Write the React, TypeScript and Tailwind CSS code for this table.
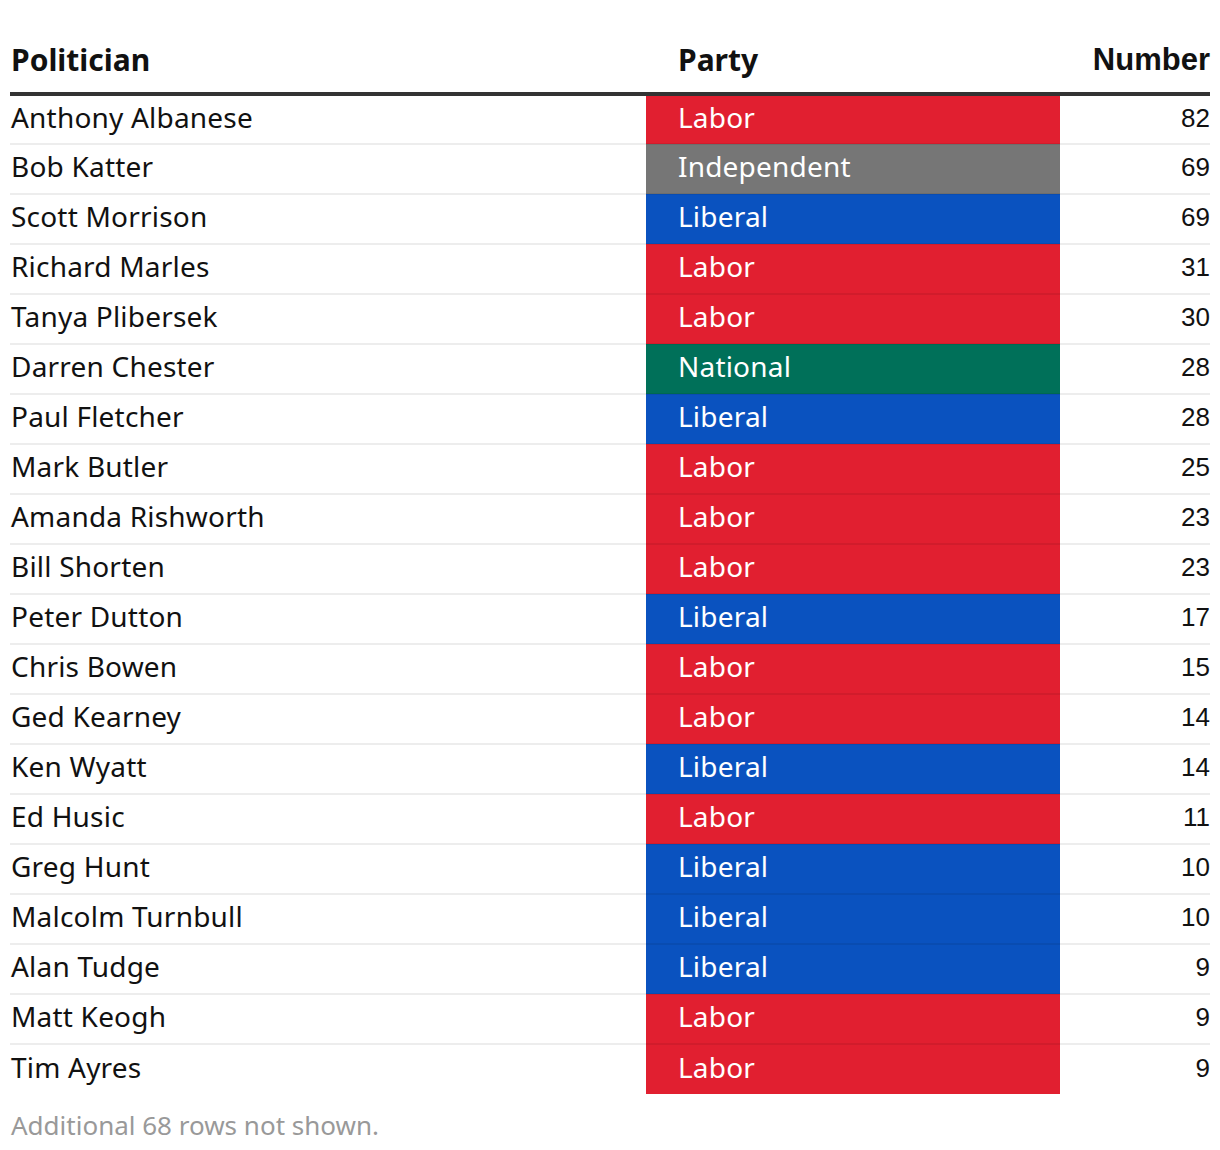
const rows: [string, string, number][] = [
  ["Anthony Albanese", "Labor", 82],
  ["Bob Katter", "Independent", 69],
  ["Scott Morrison", "Liberal", 69],
  ["Richard Marles", "Labor", 31],
  ["Tanya Plibersek", "Labor", 30],
  ["Darren Chester", "National", 28],
  ["Paul Fletcher", "Liberal", 28],
  ["Mark Butler", "Labor", 25],
  ["Amanda Rishworth", "Labor", 23],
  ["Bill Shorten", "Labor", 23],
  ["Peter Dutton", "Liberal", 17],
  ["Chris Bowen", "Labor", 15],
  ["Ged Kearney", "Labor", 14],
  ["Ken Wyatt", "Liberal", 14],
  ["Ed Husic", "Labor", 11],
  ["Greg Hunt", "Liberal", 10],
  ["Malcolm Turnbull", "Liberal", 10],
  ["Alan Tudge", "Liberal", 9],
  ["Matt Keogh", "Labor", 9],
  ["Tim Ayres", "Labor", 9],
];

const partyBg: Record<string, string> = {
  Labor: "bg-[#e11f30]",
  Independent: "bg-[#767676]",
  Liberal: "bg-[#0a52bf]",
  National: "bg-[#007059]",
};

export default function App() {
  return (
    <div className="bg-white min-h-[1150px] px-[10px] pt-[40px] font-['Noto_Sans',sans-serif] text-[#111]">
      <table className="w-full border-collapse">
        <thead>
          <tr className="border-b-4 border-[#333]">
            <th className="w-[636px] text-left font-bold text-[30px] leading-[34px] pt-[3px] pb-[15px] pl-[1px]">Politician</th>
            <th className="w-[414px] text-left font-bold text-[30px] leading-[34px] pt-[3px] pb-[15px] pl-[32px]">Party</th>
            <th className="text-right font-bold text-[31px] leading-[34px] pt-[3px] pb-[15px] font-['Liberation_Sans',sans-serif]">Number</th>
          </tr>
        </thead>
        <tbody>
          {rows.map(([name, party, n], i) => (
            <tr key={i} className={i > 0 ? "border-t-2 border-[rgba(0,0,0,0.07)]" : ""}>
              <td className="h-[50px] pl-[1px] pb-[6px] text-[28px] leading-[34px] tracking-[0.2px]">{name}</td>
              <td className={"pl-[32px] pb-[6px] text-[28px] leading-[34px] tracking-[0.2px] text-white " + partyBg[party]}>{party}</td>
              <td className="text-right pb-[4px] text-[26px] leading-[34px] font-['Liberation_Sans',sans-serif]">{n}</td>
            </tr>
          ))}
        </tbody>
      </table>
      <p className="mt-[12px] pl-[1px] text-[26px] text-[#999]">Additional 68 rows not shown.</p>
    </div>
  );
}
